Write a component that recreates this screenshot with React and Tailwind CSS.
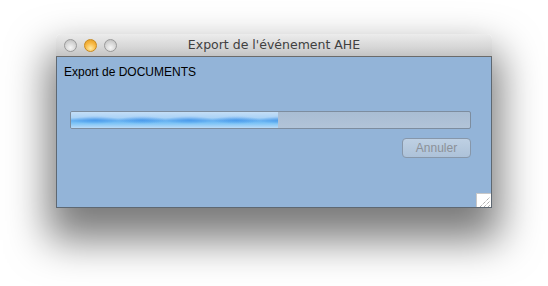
export default function App() {
  return (
    <div className="w-[548px] h-[286px] bg-white pl-[56px] pt-[34px] overflow-hidden">
      <div className="w-[436px] h-[174px] flex flex-col rounded-t-[5px] shadow-[0_24px_40px_8px_rgba(0,0,0,0.52)]">
        <div className="relative h-[23px] shrink-0 rounded-t-[5px] border-b border-[#6b6b6b] bg-[linear-gradient(to_bottom,#ececec,#d6d6d6_60%,#c4c4c4)] flex items-center">
          <div className="flex items-center gap-[7px] pl-[8px]">
            <div className="w-[13px] h-[13px] rounded-full border border-[#9a9a9a] bg-[radial-gradient(circle_at_50%_70%,#f6f6f6,#d2d2d2_60%,#b8b8b8)]" />
            <div className="w-[13px] h-[13px] rounded-full border border-[#c98a1e] bg-[radial-gradient(circle_at_50%_75%,#ffeaa4,#f7b640_55%,#e09a22)]" />
            <div className="w-[13px] h-[13px] rounded-full border border-[#9a9a9a] bg-[radial-gradient(circle_at_50%_70%,#f6f6f6,#d2d2d2_60%,#b8b8b8)]" />
          </div>
          <div className="absolute inset-0 flex items-center justify-center text-[12.5px] text-[#404040] font-['DejaVu_Sans',sans-serif] pt-[1px]">
            Export de l'événement AHE
          </div>
        </div>
        <div className="relative flex-1 bg-[#93b4d8] border-x border-b border-[#5e6872] font-['Liberation_Sans',Arial,sans-serif] text-[12px] flex flex-col">
          <div className="pl-[7px] pt-[8px] leading-[14px] text-black">Export de DOCUMENTS</div>
          <div className="pl-[13px] pr-[20px] pt-[32px]">
            <div className="h-[18px] rounded-[2px] border border-[#7d8d9f] bg-[linear-gradient(to_bottom,#a9bdd3,#b2c4d8)] overflow-hidden">
              <div className="w-[207px] h-full bg-[radial-gradient(ellipse_24px_4px_at_24px_50%,rgba(40,130,230,0.5),rgba(40,130,230,0)),linear-gradient(to_bottom,#c4def7_0%,#acd3f6_35%,#66b0f0_55%,#7cc3f6_70%,#b9dbf8_100%)] bg-[length:47px_100%,100%_100%] bg-repeat-x" />
            </div>
          </div>
          <div className="flex justify-end pr-[20px] pt-[9px]">
            <div className="w-[69px] h-[20px] rounded-[4px] border border-[#8797aa] bg-[linear-gradient(to_bottom,#bed0e3,#adc2d9)] flex items-center justify-center text-[#8c9198]">
              Annuler
            </div>
          </div>
          <div className="absolute right-0 bottom-0 w-[15px] h-[14px] bg-white border-l border-t border-[#c8c8c8]">
            <svg width="15" height="14" viewBox="0 0 15 14" className="block">
              <path d="M3 13 L13 3 M7 13 L13 7 M11 13 L13 11" stroke="#8a8a8a" strokeWidth="1" strokeDasharray="1 1" />
            </svg>
          </div>
        </div>
      </div>
    </div>
  );
}
